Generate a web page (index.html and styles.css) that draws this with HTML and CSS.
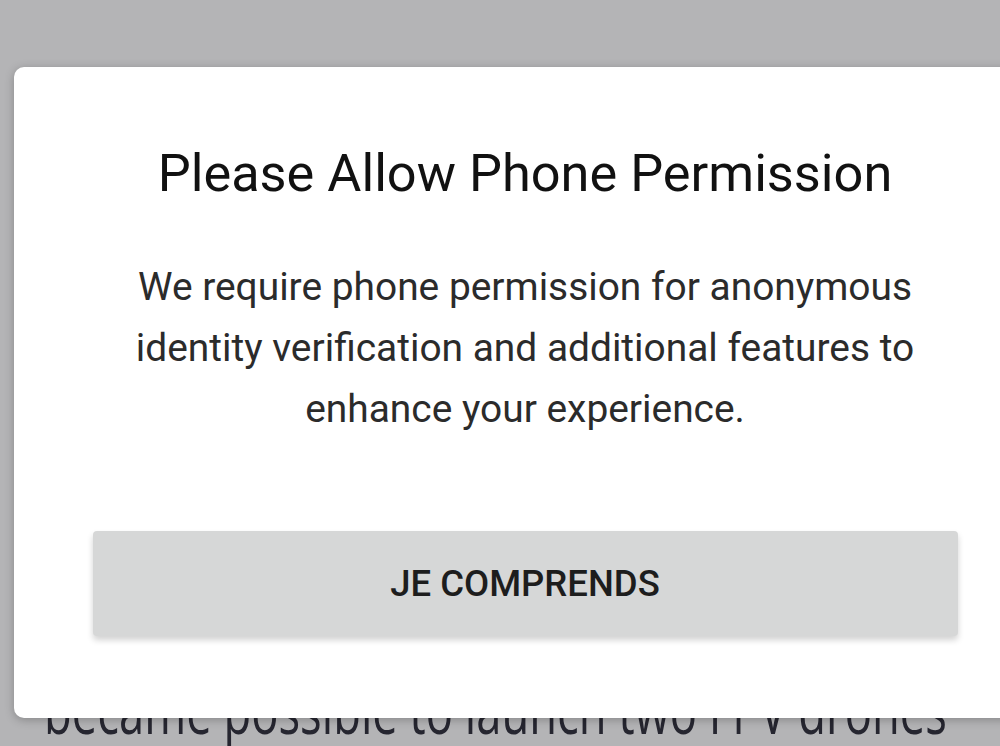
FILE: index.html
```html
<!DOCTYPE html>
<html>
  <head>
    <title>Phone Permission</title>
    <meta charset="UTF-8">
    <meta name="viewport" content="width=device-width, initial-scale=1"/>
    <link rel="stylesheet" href="styles.css">
  </head>
  <body>
    <div class="article">
      <p class="line top">In the final week, it had already</p>
      <p class="line bottom">became possible to launch two FPV drones</p>
    </div>
    <div class="dialog">
      <h1 class="title">Please Allow Phone Permission</h1>
      <p class="message">We require phone permission for anonymous identity verification and additional features to enhance your experience.</p>
      <button class="ok">JE COMPRENDS</button>
    </div>
  </body>
</html>
```

FILE: styles.css
```css
html, body {
  width: 100%;
  height: 100%;
}
body {
  margin: 0;
  background-color: #b4b4b6;
  overflow: hidden;
  position: relative;
  font-family: Roboto, sans-serif;
}
.article {
  padding-left: 44px;
}
.line {
  margin: 0;
  font-family: 'Open Sans', sans-serif;
  font-size: 56px;
  line-height: 1;
  color: #262630;
  white-space: nowrap;
  transform-origin: left top;
  transform: scale(0.81, 1.15);
}
.line.top {
  margin-top: 58px;
}
.line.bottom {
  margin-top: 562px;
}
.dialog {
  position: absolute;
  left: 14px;
  top: 67px;
  width: 1022px;
  height: 651px;
  box-sizing: border-box;
  background: #fff;
  border-radius: 10px;
  box-shadow: 0 2px 10px rgba(0,0,0,0.25);
  padding: 70px 78px 0;
  display: flex;
  flex-direction: column;
  align-items: center;
  text-align: center;
}
.title {
  margin: 0;
  font-weight: 400;
  font-size: 52.3px;
  line-height: 72px;
  color: #111;
}
.message {
  margin: 47px 0 0;
  max-width: 800px;
  font-size: 38.9px;
  line-height: 61px;
  color: #2b2b2b;
}
.ok {
  margin-top: 92px;
  width: 865px;
  height: 105px;
  flex-shrink: 0;
  border: none;
  border-radius: 4px;
  background: #d6d7d7;
  box-shadow: 0 4px 6px rgba(0,0,0,0.18);
  font-family: Roboto, sans-serif;
  font-weight: 500;
  font-size: 36.5px;
  color: #1d1d1d;
}
```
